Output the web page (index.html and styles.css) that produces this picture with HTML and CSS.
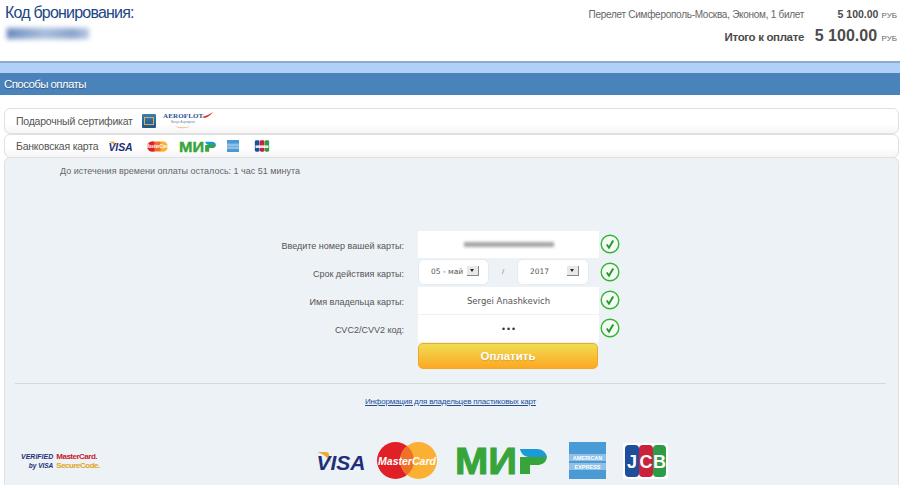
FILE: index.html
```html
<!DOCTYPE html>
<html lang="ru">
<head>
  <meta charset="UTF-8">
  <title>Способы оплаты</title>
  <link rel="stylesheet" href="styles.css">
</head>
<body>
  <svg class="defs" width="0" height="0">
    <symbol id="ok" viewBox="0 0 20 20">
      <circle cx="10" cy="10" r="8.800" fill="#f4fbf4" stroke="#2fb52f" stroke-width="1.400"/>
      <path d="M6.800 10.500l2.200 3.300 4.200-7.300" fill="none" stroke="#1f9a2a" stroke-width="1.900"/>
    </symbol>
  </svg>

  <header class="top">
    <div class="booking">
      <h1>Код бронирования:</h1>
      <div class="blur-code"></div>
    </div>
    <div class="order">
      <div class="order-row">
        <span class="order-name">Перелет Симферополь-Москва, Эконом, 1 билет</span>
        <span class="order-sum"><b>5 100.00</b> <small>РУБ</small></span>
      </div>
      <div class="order-row total">
        <span class="total-name">Итого к оплате</span>
        <span class="total-sum"><b>5 100.00</b> <small>РУБ</small></span>
      </div>
    </div>
  </header>

  <div class="stripe"></div>
  <h2 class="section-title">Способы оплаты</h2>

  <div class="tab tab-first">
    <span class="tab-name">Подарочный сертификат</span>
    <span class="aero-card"><i></i></span>
    <svg class="aero-logo" viewBox="0 0 50 20">
      <text x="0" y="7" textLength="40" class="aero-text">AEROFLOT</text>
      <path d="M39 6c4-1 8-3 11-5-2 3-5 5-8 6z" fill="#d8322f"/>
      <text x="8" y="12" class="aero-small">Бонус Аэрофлот</text>
      <path d="M12 15c5 2 10 2 15 0-4 3-11 3-15 0z" fill="#f0a060"/>
    </svg>
  </div>
  <div class="tab tab-second">
    <span class="tab-name">Банковская карта</span>
    <svg class="logo s-visa" viewBox="0 0 50 20">
      <path d="M1 1h9c2 0 3 1 3 3l2 8C12 6 7 3 1 1z" fill="#f0a92e"/>
      <text x="25" y="19" text-anchor="middle" class="visa-text">VISA</text>
    </svg>
    <svg class="logo s-mc" viewBox="0 0 60 28">
      <circle cx="17" cy="14" r="14" fill="#e01f26"/>
      <circle cx="43" cy="14" r="14" fill="#fbb033"/>
      <path d="M22 1h16v26H22z" fill="#f0702a"/>
      <text x="30" y="18" text-anchor="middle" class="mc-text">MasterCard</text>
    </svg>
    <svg class="logo s-mir" viewBox="0 0 92 26">
      <text x="0" y="25.500" textLength="62" lengthAdjust="spacingAndGlyphs" class="mir-text">МИ</text>
      <path d="M65 9h27c-1 6-5 8-10 8h-7v9H65z" fill="#37a53a"/>
      <path d="M65 1h17c5 0 9 3 10 8H74c-4 0-8-3-9-8z" fill="#1a9ad6"/>
    </svg>
    <svg class="logo s-amex" viewBox="0 0 37 37">
      <rect width="37" height="37" fill="#4a9ad6"/>
      <rect y="11" width="37" height="8" fill="#8fc1e6"/>
      <rect y="20" width="37" height="8" fill="#8fc1e6"/>
    </svg>
    <svg class="logo s-jcb" viewBox="0 0 45 36">
      <rect x="1" y="1" width="14" height="34" rx="4" fill="#1d4f9c"/>
      <rect x="16" y="1" width="14" height="34" rx="4" fill="#c9223a"/>
      <rect x="31" y="1" width="13" height="34" rx="4" fill="#2d9c46"/>
      <path d="M3 16h39v8H3z" fill="#fff" opacity="0.85"/>
    </svg>
  </div>

  <main class="panel">
    <p class="timer">До истечения времени оплаты осталось: 1 час 51 минута</p>

    <form class="card-form">
      <label>Введите номер вашей карты:</label>
      <div class="field"><div class="blur-number"></div></div>
      <svg class="ok"><use href="#ok"/></svg>

      <label>Срок действия карты:</label>
      <div class="date">
        <div class="select"><span>05 - май</span><i class="arrow"></i></div>
        <span class="slash">/</span>
        <div class="select"><span>2017</span><i class="arrow"></i></div>
      </div>
      <svg class="ok"><use href="#ok"/></svg>

      <label>Имя владельца карты:</label>
      <div class="field">Sergei Anashkevich</div>
      <svg class="ok"><use href="#ok"/></svg>

      <label>CVC2/CVV2 код:</label>
      <div class="field dots">•••</div>
      <svg class="ok"><use href="#ok"/></svg>

      <button class="pay" type="button">Оплатить</button>
    </form>

    <hr class="line">
    <a class="info-link" href="#">Информация для владельцев пластиковых карт</a>

    <div class="logos">
      <div class="secure">
        <div class="verified"><b>VERIFIED</b><b class="by">by VISA</b></div>
        <div class="securecode"><b>MasterCard.</b><b class="sc">SecureCode.</b></div>
      </div>
      <div class="big-logos">
        <svg class="logo b-visa" viewBox="0 0 50 20">
          <path d="M1 1h9c2 0 3 1 3 3l2 8C12 6 7 3 1 1z" fill="#f0a92e"/>
          <text x="25" y="19" text-anchor="middle" class="visa-text">VISA</text>
        </svg>
        <svg class="logo b-mc" viewBox="0 0 60 37">
          <circle cx="18.500" cy="18.500" r="18.500" fill="#e01f26"/>
          <circle cx="41.500" cy="18.500" r="18.500" fill="#fbb033"/>
          <path d="M30 4a18.500 18.500 0 0 1 0 29a18.500 18.500 0 0 1 0-29z" fill="#f0702a"/>
          <text x="30" y="23" text-anchor="middle" class="mc-big">MasterCard</text>
        </svg>
        <svg class="logo b-mir" viewBox="0 0 92 26">
          <text x="0" y="25.500" textLength="62" lengthAdjust="spacingAndGlyphs" class="mir-text">МИ</text>
          <path d="M65 9h27c-1 6-5 8-10 8h-7v9H65z" fill="#37a53a"/>
          <path d="M65 1h17c5 0 9 3 10 8H74c-4 0-8-3-9-8z" fill="#1a9ad6"/>
        </svg>
        <svg class="logo b-amex" viewBox="0 0 37 37">
          <rect width="37" height="37" fill="#4a9ad6"/>
          <rect y="12" width="37" height="7" fill="#8fc1e6"/>
          <rect y="21" width="37" height="7" fill="#8fc1e6"/>
          <text x="18.500" y="18" text-anchor="middle" class="amex-text">AMERICAN</text>
          <text x="18.500" y="27" text-anchor="middle" class="amex-text">EXPRESS</text>
        </svg>
        <svg class="logo b-jcb" viewBox="0 0 45 36">
          <rect width="45" height="36" rx="2" fill="#fff"/>
          <rect x="2" y="2" width="14" height="32" rx="4" fill="#1d4f9c"/>
          <rect x="16" y="2" width="14" height="32" rx="4" fill="#c9223a"/>
          <rect x="30" y="2" width="13" height="32" rx="4" fill="#2d9c46"/>
          <text x="9" y="25" text-anchor="middle" class="jcb-text">J</text>
          <text x="23" y="25" text-anchor="middle" class="jcb-text">C</text>
          <text x="36.500" y="25" text-anchor="middle" class="jcb-text">B</text>
        </svg>
      </div>
    </div>
  </main>
</body>
</html>
```

FILE: styles.css
```css
html, body {
  margin: 0;
  height: 485px;
  overflow: hidden;
}

body {
  font-family: "Liberation Sans", Arial, sans-serif;
  background: #fff;
  color: #555;
}

.defs {
  position: absolute;
}

/* header */
.top {
  display: flex;
  justify-content: space-between;
  height: 61px;
  padding: 0 3px 0 5px;
  box-sizing: border-box;
}

.booking h1 {
  margin: 4px 0 0;
  font-size: 16px;
  line-height: 18px;
  letter-spacing: -0.8px;
  font-weight: normal;
  color: #1d4684;
}

.blur-code {
  width: 80px;
  height: 11px;
  margin: 6px 0 0 2px;
  background: linear-gradient(90deg, #6f8fc0, #a9bedd 45%, #8aa4cc 80%, #b9c9e2);
  border-left: 2px solid #4f74ad;
  filter: blur(2.500px);
}

.order {
  padding-top: 7px;
}

.order-row {
  display: flex;
  justify-content: flex-end;
  align-items: baseline;
}

.order-name {
  font-size: 10px;
  line-height: 15px;
  letter-spacing: -0.28px;
  color: #666;
}

.order-sum {
  width: 93px;
  white-space: nowrap;
  text-align: right;
  font-size: 11px;
  color: #4b4b4b;
}

.order-sum b {
  font-size: 10.500px;
}

small {
  font-size: 8px;
  color: #666;
}

.total {
  margin-top: 5px;
}

.total-name {
  font-size: 11.500px;
  letter-spacing: -0.35px;
  font-weight: bold;
  color: #4b4b4b;
}

.total-sum {
  width: 93px;
  white-space: nowrap;
  text-align: right;
  color: #4b4b4b;
}

.total-sum b {
  font-size: 16px;
}

/* title bar */
.stripe {
  height: 10px;
  border-top: 2px solid #8fa9c9;
  background: #b0d0f7;
}

.section-title {
  margin: 0;
  height: 22px;
  padding-left: 4px;
  font-size: 11.500px;
  letter-spacing: -0.6px;
  line-height: 22px;
  font-weight: normal;
  color: #fff;
  background: #4a82ba;
  text-shadow: 0 1px 1px rgba(0, 0, 0, 0.3);
}

/* tabs */
.tab {
  display: flex;
  align-items: center;
  box-sizing: border-box;
  margin: 0 1px 0 4px;
  padding-left: 11px;
  border: 1px solid #e0e0e0;
  border-radius: 6px;
  background: linear-gradient(#fff 60%, #f5f5f5);
  font-size: 10.500px;
  letter-spacing: -0.22px;
  color: #555;
}

.tab-first {
  height: 26px;
  margin-top: 13px;
}

.tab-second {
  height: 24px;
  margin-bottom: -1px;
}

.tab-name {
  white-space: nowrap;
}

.aero-card {
  display: block;
  flex: none;
  box-sizing: border-box;
  width: 14px;
  height: 14px;
  margin-left: 9px;
  padding: 3px 2px;
  background: linear-gradient(#3b7cb8, #1f5488);
  border-radius: 1px;
}

.aero-card i {
  display: block;
  height: 8px;
  box-sizing: border-box;
  border: 1px solid #dcae48;
}

.aero-logo {
  flex: none;
  width: 50px;
  height: 20px;
  margin-left: 7px;
}

.aero-text {
  font: bold 7px "Liberation Serif", serif;
  fill: #2a4f92;
}

.aero-small {
  font: 3.500px "Liberation Sans", sans-serif;
  fill: #7a8fae;
}

.logo {
  flex: none;
  overflow: visible;
}

.s-visa { width: 25px; height: 10px; margin-left: 10px; }
.s-mc { width: 23px; height: 11px; margin-left: 13px; }
.s-mir { width: 37px; height: 11px; margin-left: 10px; }
.s-amex { width: 14px; height: 12px; margin-left: 10px; }
.s-jcb { width: 16px; height: 12px; margin-left: 14px; }

.visa-text {
  font: italic bold 21px "Liberation Sans", sans-serif;
  fill: #1e2f78;
}

.mc-text {
  font: italic bold 12px "Liberation Sans", sans-serif;
  fill: #fff;
}

.mc-big {
  font: italic bold 10.500px "Liberation Sans", sans-serif;
  fill: #fff;
}

.mir-text {
  font: bold 37px "Liberation Sans", sans-serif;
  fill: #37a53a;
  stroke: #37a53a;
  stroke-width: 1px;
}

.amex-text {
  font: bold 5.500px "Liberation Sans", sans-serif;
  fill: #fff;
}

.jcb-text {
  font: bold 18px "Liberation Sans", sans-serif;
  fill: #fff;
}

/* panel */
.panel {
  box-sizing: border-box;
  height: 329px;
  margin: 0 1px 0 4px;
  border: 1px solid #e0e0e0;
  border-radius: 6px 6px 0 0;
  background: #edf2f7;
  overflow: hidden;
}

.timer {
  margin: 7px 0 0 55px;
  font-size: 9px;
  line-height: 12px;
  color: #666;
}

.card-form {
  display: grid;
  grid-template-columns: 400px 181px 22px;
  grid-auto-rows: 28px;
  column-gap: 13px;
  margin-top: 54px;
  font-size: 9px;
}

.card-form > label {
  padding-right: 1px;
  text-align: right;
  line-height: 30px;
  color: #555;
}

.ok {
  width: 20px;
  height: 20px;
  margin: 3px 0 0 -12px;
}

.field {
  display: flex;
  align-items: center;
  justify-content: center;
  height: 27px;
  background: #fff;
  font-family: "DejaVu Sans", sans-serif;
  font-size: 8.500px;
  color: #555;
}

.blur-number {
  width: 90px;
  height: 5px;
  background: #a5a5a5;
  filter: blur(1.500px);
}

.dots {
  font-size: 8.500px;
  color: #333;
}

.date {
  display: flex;
  align-items: flex-start;
  height: 28px;
}

.select {
  display: flex;
  align-items: center;
  justify-content: space-between;
  box-sizing: border-box;
  width: 71px;
  height: 26px;
  padding: 0 9px 2px 12px;
  border-radius: 6px;
  background: #fff;
  border: 1px solid #e6ebf0;
  font-family: "DejaVu Sans", sans-serif;
  font-size: 7.500px;
  color: #555;
}

.slash {
  width: 28px;
  text-align: center;
  line-height: 26px;
  color: #888;
  font-size: 8px;
}

.select + .slash + .select {
  width: 72px;
  padding-left: 12px;
}

.arrow {
  position: relative;
  flex: none;
  width: 12px;
  height: 10px;
  background: #e8e8e8;
  border-right: 1px solid #888;
  border-bottom: 1px solid #888;
  box-sizing: border-box;
}

.arrow::after {
  content: "";
  position: absolute;
  left: 3px;
  top: 3px;
  border: 2px solid transparent;
  border-top: 3px solid #222;
  border-bottom: 0;
}

.pay {
  grid-column: 2;
  width: 180px;
  height: 26px;
  margin: 0;
  padding: 0;
  border: 1px solid #f2a81e;
  border-radius: 5px;
  background: linear-gradient(#efdd50, #fda825);
  font-family: "Liberation Sans", Arial, sans-serif;
  font-size: 11.500px;
  font-weight: bold;
  color: #fff;
  text-shadow: 0 1px 1px rgba(190, 120, 0, 0.4);
}

.line {
  margin: 12px 12px 0 10px;
  border: 0;
  border-top: 1px solid #d5d9d9;
}

.info-link {
  display: block;
  margin: 13px 0 0;
  padding-right: 2px;
  text-align: center;
  font-size: 8px;
  letter-spacing: -0.2px;
  line-height: 10px;
  color: #1d4f96;
}

/* bottom logos */
.logos {
  display: flex;
  align-items: center;
  margin-top: 35px;
}

.secure {
  display: flex;
  align-items: center;
  flex: none;
  margin-left: 16px;
  width: 295px;
  line-height: 9px;
}

.verified {
  font-size: 7px;
  font-style: italic;
  color: #1e2f78;
  text-align: right;
}

.verified b, .securecode b {
  display: block;
}

.by {
  font-size: 6.500px;
}

.securecode {
  margin-left: 3px;
  font-size: 8px;
  letter-spacing: -0.5px;
  color: #c8202a;
}

.sc {
  color: #e0a520;
}

.big-logos {
  display: flex;
  align-items: center;
}

.b-visa { width: 50px; height: 20px; }
.b-mc { width: 60px; height: 37px; margin-left: 11px; }
.b-mir { width: 92px; height: 26px; margin-left: 18px; }
.b-amex { width: 37px; height: 37px; margin-left: 22px; }
.b-jcb { width: 45px; height: 36px; margin-left: 17px; }
```
